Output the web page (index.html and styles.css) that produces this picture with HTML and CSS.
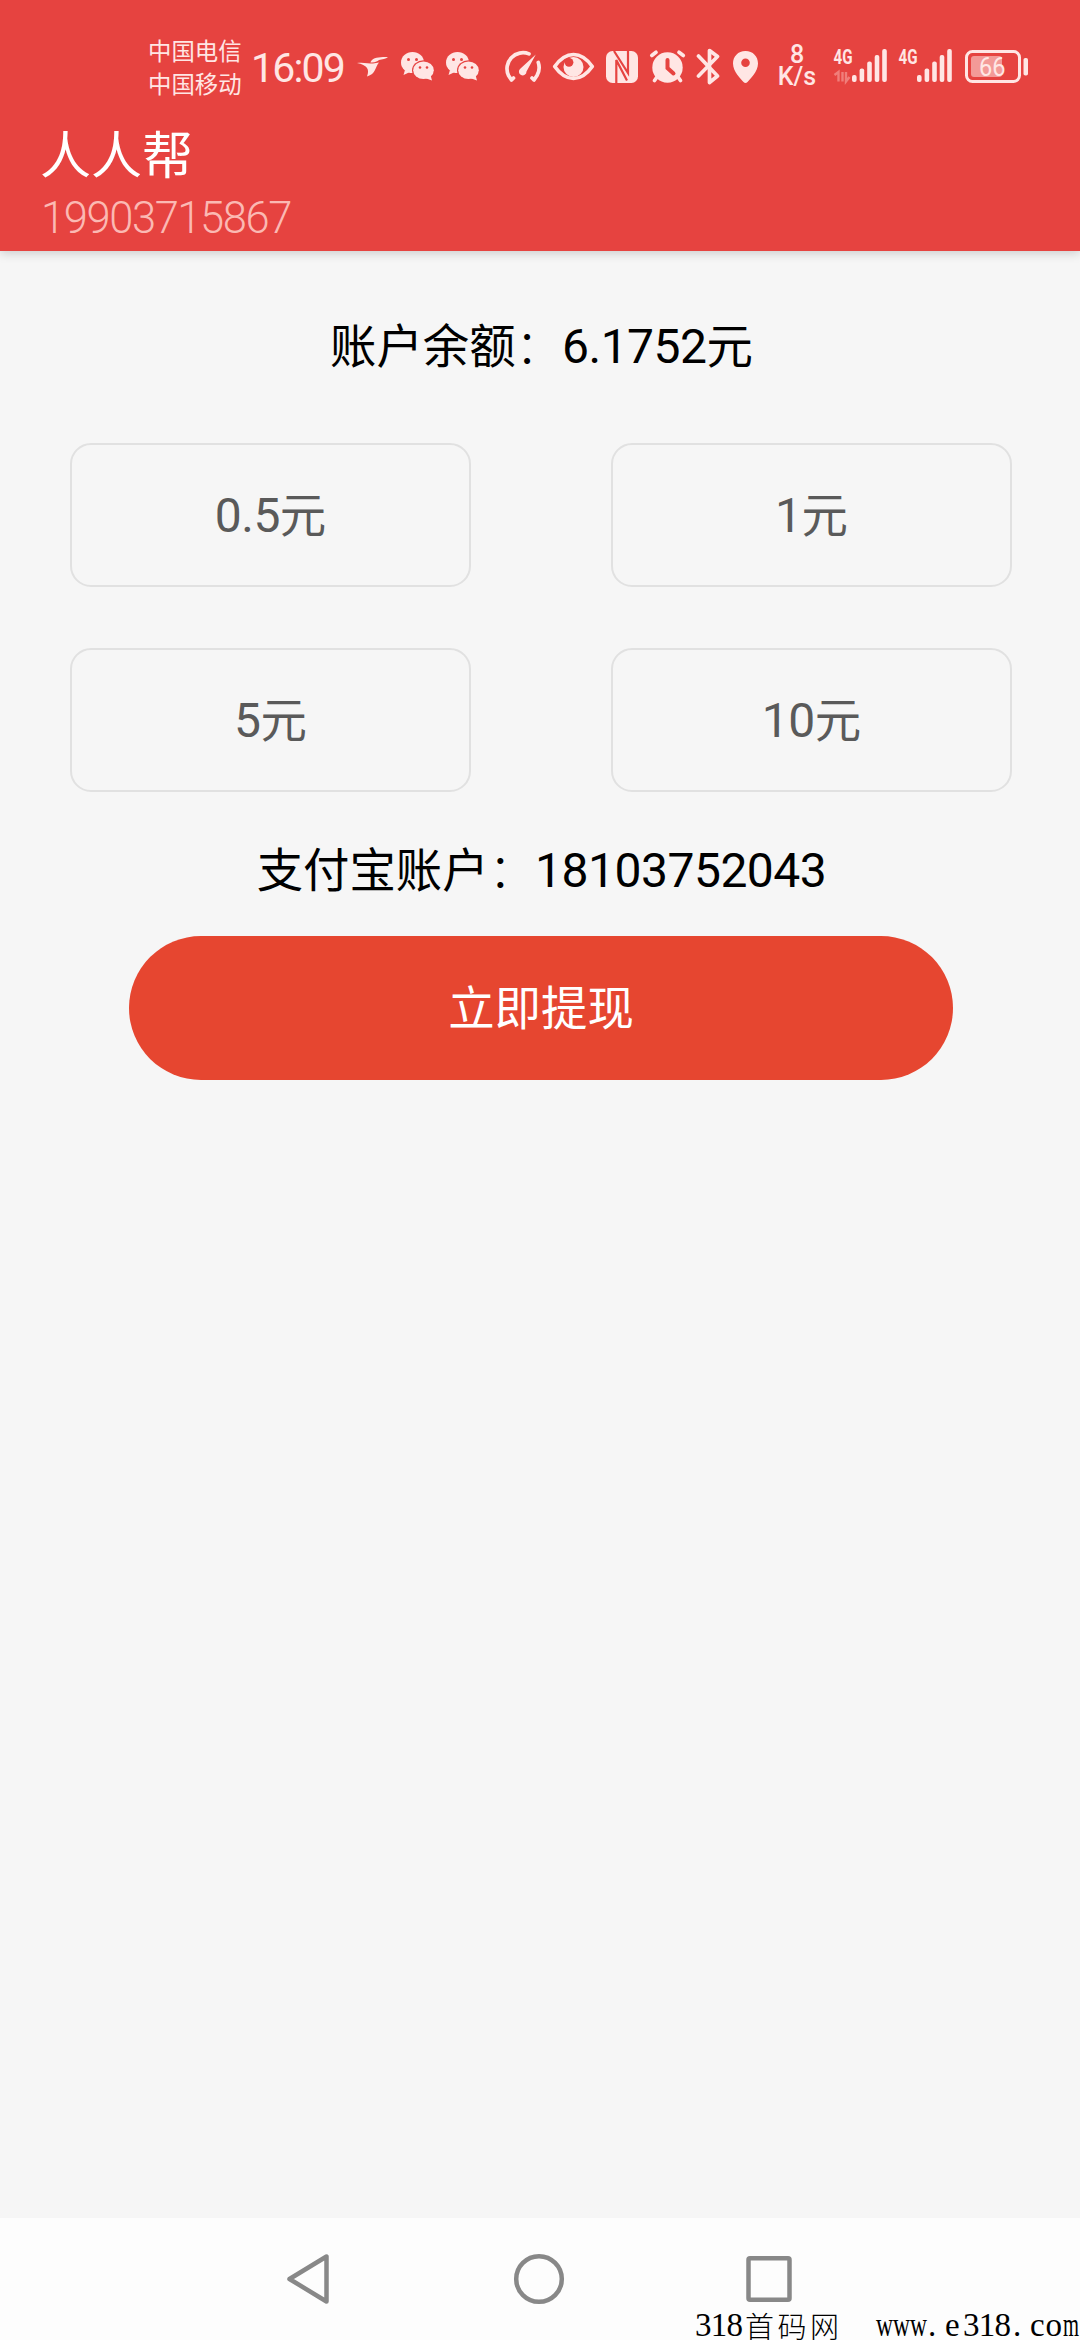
FILE: index.html
```html
<!DOCTYPE html>
<html lang="zh-CN">
<head>
<meta charset="utf-8">
<title>人人帮</title>
<link rel="stylesheet" href="styles.css">
</head>
<body>
<div class="screen">
  <header class="header">
    <div class="status">
      <div class="carriers"><span>中国电信</span><span>中国移动</span></div>
      <div class="clock">16:09</div>
      <svg class="icon bird" viewBox="357 44 32 44" width="32" height="44"><path d="M388 57C381 57 375 57 372 60C371 61 370.500 62 370.500 62.500C375 63 378 61 379 60C382 59 386 59 388 57ZM357 63C362 62 369 63.500 373 63.500L379 62.500C375 67 376 74 367 76.500C370 69 367 65 357 63Z"/></svg>
      <svg class="icon chat" viewBox="400 44 35 44" width="35" height="44"><use href="#wechat"/></svg>
      <svg class="icon chat2" viewBox="400 44 35 44" width="35" height="44"><g id="wechat"><path d="M405 70L403.500 75L410 72Z"/><ellipse cx="412.500" cy="62.500" rx="11.500" ry="10.500"/><ellipse class="cut-fill" cx="423.500" cy="70.300" rx="11.500" ry="10"/><ellipse cx="423.500" cy="70.300" rx="10.300" ry="8.800"/><path d="M425 78L432 80.500L430.500 75Z"/><g class="cut-fill"><circle cx="408.500" cy="59.500" r="1.500"/><circle cx="416.500" cy="59.500" r="1.500"/><circle cx="420" cy="67.500" r="1.300"/><circle cx="427" cy="67.500" r="1.300"/></g></g></svg>
      <svg class="icon gauge" viewBox="504 44 38 44" width="38" height="44"><g class="line"><path d="M529 53.900A16 16 0 0 0 508.500 75.500L511.500 80L513.500 78"/><path d="M538.300 62.500A16 16 0 0 1 537 75.500L534 80L532 78"/></g><path d="M535.800 54.500L526.500 71.500A3.800 3.800 0 1 1 520.500 68.500Z"/></svg>
      <svg class="icon eye" viewBox="552 44 43 44" width="43" height="44"><path class="line" d="M554.700 66.500C566 50.500 581 50.500 592.300 66.500C581 82.500 566 82.500 554.700 66.500Z"/><circle cx="573.500" cy="67" r="10"/><circle class="cut-fill" cx="569" cy="62.300" r="4.400"/></svg>
      <svg class="icon nfc" viewBox="605 44 34 44" width="34" height="44"><rect x="606" y="51" width="32" height="32" rx="6.500"/><path class="cut-line" d="M616.300 84V60L627 80.500M628 50V73L614 51"/></svg>
      <svg class="icon alarm" viewBox="649 44 37 44" width="37" height="44"><circle cx="667.500" cy="67.500" r="15.200"/><path class="line" d="M651.800 55.500L656 52.300M683.300 55.500L679 52.300M657 77L654.500 80.500M678 77L680.500 80.500"/><path class="cut-line thick" d="M667.500 60V68L673.500 73.500"/></svg>
      <svg class="icon bt" viewBox="696 44 25 44" width="25" height="44"><path class="line" d="M698.500 56L717.500 76L709.500 82.500V50.500L717.500 56.500L698.500 76"/></svg>
      <svg class="icon pin" viewBox="732 44 27 44" width="27" height="44"><path fill-rule="evenodd" d="M745.500 51C738 51 733 56.500 733 63.500C733 72 741 79 743.500 82Q745.500 84 747.500 82C750 79 758 72 758 63.500C758 56.500 753 51 745.500 51ZM745.500 58.500A4.300 4.300 0 1 1 745.500 67.100A4.300 4.300 0 1 1 745.500 58.500Z"/></svg>
      <div class="speed"><span>8</span><span>K/s</span></div>
      <svg class="icon signal" viewBox="832 44 56 44" width="56" height="44"><text class="gen" x="833.500" y="64" textLength="19" lengthAdjust="spacingAndGlyphs">4G</text><path class="faint" d="M834.500 75L838.500 72V81.500M842.500 72V81.500M846 72V81.500L849.500 77"/><g id="bars"><rect x="852" y="75" width="4.600" height="7" rx="2"/><rect x="859.600" y="68.500" width="4.600" height="13.500" rx="2"/><rect x="867.200" y="61.500" width="4.600" height="20.500" rx="2"/><rect x="874.700" y="55" width="4.600" height="27" rx="2"/><rect x="882.200" y="49" width="4.600" height="33" rx="2"/></g></svg>
      <svg class="icon signal2" viewBox="832 44 56 44" width="56" height="44"><text class="gen" x="833.500" y="64" textLength="19" lengthAdjust="spacingAndGlyphs">4G</text><use href="#bars"/></svg>
      <svg class="icon battery" viewBox="964 44 66 44" width="66" height="44"><rect class="charge" x="971" y="56" width="31" height="21" rx="3"/><rect class="line thin" x="966.500" y="51.500" width="53" height="30" rx="6"/><rect x="1023.500" y="58" width="4.500" height="17.500" rx="1.800"/><text class="level" x="979" y="76" textLength="26.500" lengthAdjust="spacingAndGlyphs">66</text></svg>
    </div>
    <h1 class="title">人人帮</h1>
    <div class="phone">19903715867</div>
  </header>
  <main class="main">
    <p class="info">账户余额<span class="colon">：</span><span class="num">6.1752</span>元</p>
    <div class="amounts">
      <button class="amount"><span class="num">0.5</span>元</button>
      <button class="amount"><span class="num">1</span>元</button>
      <button class="amount"><span class="num">5</span>元</button>
      <button class="amount"><span class="num">10</span>元</button>
    </div>
    <p class="info">支付宝账户<span class="colon">：</span><span class="num">18103752043</span></p>
    <button class="submit">立即提现</button>
  </main>
  <nav class="nav">
    <svg width="50" height="60" viewBox="0 0 50 60"><path d="M5.500 30L42.500 7.500V52.500Z"/></svg>
    <svg width="60" height="60" viewBox="0 0 60 60"><circle cx="30" cy="30" r="22.800"/></svg>
    <svg width="50" height="60" viewBox="0 0 50 60"><rect x="4.500" y="9.200" width="41" height="41.600" rx="1.500"/></svg>
  </nav>
  <svg class="watermark" width="390" height="36" viewBox="690 2304 390 36">
    <text x="695" y="2336" textLength="48" lengthAdjust="spacing">318</text>
    <text class="cjk" x="745" y="2337.500" textLength="94" lengthAdjust="spacing">首码网</text>
    <text x="876" y="2336" textLength="51" lengthAdjust="spacingAndGlyphs">www</text>
    <text x="928" y="2336">.</text>
    <text x="945" y="2336">e</text>
    <text x="963" y="2336" textLength="48" lengthAdjust="spacing">318</text>
    <text x="1013" y="2336">.</text>
    <text x="1030" y="2336" textLength="32" lengthAdjust="spacing">co</text>
    <text x="1063" y="2336" textLength="16" lengthAdjust="spacingAndGlyphs">m</text>
  </svg>
</div>
</body>
</html>
```

FILE: styles.css
```css
* { box-sizing: border-box; }
body { margin: 0; }
h1, p { margin: 0; font-weight: 400; }
button { font: inherit; border: 0; padding: 0; background: none; }

.screen {
  position: relative;
  display: flex;
  flex-direction: column;
  width: 1080px;
  height: 2340px;
  overflow: hidden;
  background: #f6f6f6;
  font-family: Roboto, "Noto Sans CJK SC", sans-serif;
  font-size: 46.4px;
  line-height: 60px;
  color: #000;
}

.header {
  height: 251px;
  padding-left: 40px;
  background: #e64340;
  box-shadow: 0 2px 10px rgba(0, 0, 0, .18);
}
.status {
  display: flex;
  align-items: center;
  height: 132px;
  padding-left: 108px;
  color: #ffe6e4;
}
.carriers {
  display: flex;
  flex-direction: column;
  width: 95px;
  margin-top: 5px;
  font-size: 23.4px;
  line-height: 33px;
  white-space: nowrap;
}
.clock {
  width: 105px;
  margin: 3px 0 0 8px;
  font-size: 41px;
  letter-spacing: -1.8px;
}
.icon { flex: none; display: block; fill: #ffe6e4; }
.line { fill: none; stroke: #ffe6e4; stroke-width: 3.700; stroke-linecap: round; stroke-linejoin: round; }
.thin { stroke-width: 3; }
.cut-fill { fill: #e64340; }
.cut-line { fill: none; stroke: #e64340; stroke-width: 2.200; }
.thick { stroke-width: 4; stroke-linecap: round; }
.faint { fill: none; stroke: #f07e7a; stroke-width: 2.400; }
.charge { fill: #f39a97; }
.bird { margin-left: 1px; }
.chat { margin-left: 11px; }
.chat2 { margin-left: 10px; }
.gauge { margin-left: 24px; }
.eye { margin-left: 10px; }
.nfc { margin-left: 10px; }
.alarm { margin-left: 10px; }
.bt { margin-left: 10px; }
.pin { margin-left: 11px; }
.speed {
  display: flex;
  flex-direction: column;
  align-items: center;
  width: 40px;
  margin-left: 18px;
  font-size: 25px;
  font-weight: 500;
  line-height: 22px;
}
.signal { margin-left: 15px; }
.signal2 { margin-left: 9px; }
.battery { margin-left: 11px; }
.gen { font-size: 21px; font-weight: 700; }
.level { font-size: 26px; }

.title {
  height: 56px;
  color: #fff;
  font-size: 51px;
  line-height: 50px;
}
.phone {
  padding-left: 1px;
  color: #fbb9b3;
  font-size: 43.500px;
  font-weight: 350;
  line-height: 61px;
  letter-spacing: -1.4px;
}

.main {
  flex: 1;
  display: flex;
  flex-direction: column;
  align-items: center;
  padding-top: 66px;
}
.info { padding-left: 3px; }
.colon { font-weight: 300; }
.num { font-size: 48px; letter-spacing: -.5px; }
.amounts {
  display: grid;
  grid-template-columns: 401px 401px;
  grid-auto-rows: 144px;
  gap: 61px 140px;
  margin: 66px 0 49px 2px;
}
.amount {
  border: 2px solid #e1e1e1;
  border-radius: 21px;
  padding-top: 1px;
  color: #5a5a5a;
}
.submit {
  width: 824px;
  height: 144px;
  margin: 35px 0 0 2px;
  border-radius: 72px;
  padding-top: 1px;
  background: #e64630;
  color: #fff;
}

.nav {
  display: flex;
  align-items: center;
  justify-content: space-between;
  height: 122px;
  padding: 0 286px 0 284px;
  background: #fdfdfd;
}
.nav svg { fill: none; stroke: #888; stroke-width: 4.500; stroke-linejoin: round; }
.watermark {
  position: absolute;
  right: 0;
  bottom: 0;
  font-family: "Liberation Serif", serif;
  font-size: 33px;
}
.cjk { font-family: "Noto Sans CJK SC", sans-serif; font-size: 29px; font-weight: 300; }
```
